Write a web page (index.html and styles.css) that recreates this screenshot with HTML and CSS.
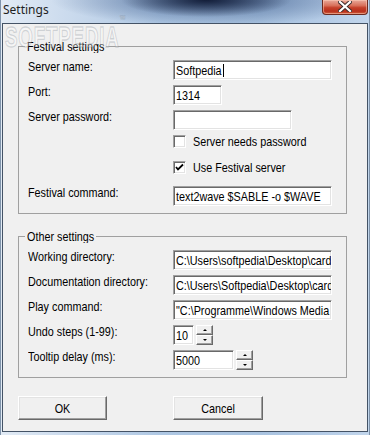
FILE: index.html
```html
<!DOCTYPE html>
<html>
<head>
<meta charset="utf-8">
<link rel="stylesheet" href="styles.css">
</head>
<body>
<div class="window">
  <div class="titlebar">
    <span class="title">Settings</span>
    <div class="close">
      <svg width="14" height="11" viewBox="0 0 14 11">
        <path d="M2 1 L12 10 M12 1 L2 10" stroke="#3a2a2a" stroke-width="4" stroke-linecap="square" fill="none"/>
        <path d="M2 1 L12 10 M12 1 L2 10" stroke="#ffffff" stroke-width="2.2" stroke-linecap="square" fill="none"/>
      </svg>
    </div>
  </div>
  <div class="client">
    <fieldset class="group g1">
      <legend><span class="t">Festival settings</span></legend>
      <div class="row"><span class="lbl t">Server name:</span><div class="field w-long"><span class="t">Softpedia</span><span class="caret"></span></div></div>
      <div class="row"><span class="lbl t">Port:</span><div class="field w-port"><span class="t">1314</span></div></div>
      <div class="row"><span class="lbl t">Server password:</span><div class="field w-pass"></div></div>
      <div class="row crow c1"><span></span><div class="check"><span class="box"></span><span class="ctext t">Server needs password</span></div></div>
      <div class="row crow c2"><span></span><div class="check"><span class="box"><svg width="9" height="9" viewBox="0 0 9 9"><path d="M1 4 L3 6.5 L8 1.5" stroke="#000" stroke-width="1.8" fill="none"/></svg></span><span class="ctext t">Use Festival server</span></div></div>
      <div class="row c3"><span class="lbl t">Festival command:</span><div class="field w-long"><span class="t">text2wave $SABLE -o $WAVE</span></div></div>
    </fieldset>
    <fieldset class="group g2">
      <legend><span class="t">Other settings</span></legend>
      <div class="row"><span class="lbl t">Working directory:</span><div class="field w-long"><span class="t">C:\Users\softpedia\Desktop\cards</span></div></div>
      <div class="row"><span class="lbl t">Documentation directory:</span><div class="field w-long"><span class="t">C:\Users\Softpedia\Desktop\cards</span></div></div>
      <div class="row"><span class="lbl t">Play command:</span><div class="field w-long"><span class="t">"C:\Programme\Windows Media Player\wmplayer.exe"</span></div></div>
      <div class="row"><span class="lbl t">Undo steps (1-99):</span><div class="spinwrap"><div class="field w-undo"><span class="t">10</span></div><div class="spin"><span class="sb up"><i></i></span><span class="sb dn"><i></i></span></div></div></div>
      <div class="row"><span class="lbl t">Tooltip delay (ms):</span><div class="spinwrap"><div class="field w-tip"><span class="t">5000</span></div><div class="spin"><span class="sb up"><i></i></span><span class="sb dn"><i></i></span></div></div></div>
    </fieldset>
    <div class="buttons">
      <button class="btn"><span class="t">OK</span></button>
      <button class="btn"><span class="t">Cancel</span></button>
    </div>
  </div>
  <div class="watermark">SOFTPEDIA<sup>™</sup></div>
</div>
</body>
</html>
```
FILE: styles.css
```css
html, body {
  margin: 0;
  padding: 0;
  background: #bcd2ea;
}
.window {
  position: relative;
  width: 370px;
  height: 435px;
  overflow: hidden;
  box-sizing: border-box;
  border-left: 1px solid #7f93aa;
  border-right: 1px solid #7f93aa;
  background:
    radial-gradient(ellipse 85px 17px at 205px 0px, rgba(16,26,52,0.95), rgba(16,26,52,0) 100%),
    radial-gradient(ellipse 160px 26px at 210px 0px, rgba(50,80,130,0.75), rgba(50,80,130,0) 100%),
    linear-gradient(90deg, #e2ebf5 0px, #cddcee 60px, #aec7e3 160px, #a9c3e0 260px, #b4cbe6 320px, #c2d6ec 370px);
  font-family: "Liberation Sans", Arial, sans-serif;
  font-size: 10.8px;
  color: #000;
}
.t {
  display: inline-block;
  transform: scaleY(1.18);
}
.titlebar {
  height: 23px;
  display: flex;
  align-items: flex-start;
}
.title {
  font-family: "Noto Sans", "Open Sans", sans-serif;
  font-size: 12px;
  line-height: 16px;
  padding: 2px 0 0 2px;
  color: #1e1e1e;
}
.close {
  margin-left: auto;
  margin-right: 1px;
  width: 46px;
  height: 15px;
  box-sizing: border-box;
  border: 1px solid #6b2a20;
  border-top: none;
  border-radius: 0 0 4px 4px;
  background: linear-gradient(180deg, #e9a99a 0%, #d8705a 40%, #c5402a 55%, #b8301c 80%, #d0603e 100%);
  box-shadow: inset 0 0 0 1px rgba(255,210,190,0.5);
  display: flex;
  align-items: center;
  justify-content: center;
}
.close svg { display: block; margin-top: -1px; }
.client {
  margin: 0 1px;
  height: 409px;
  box-sizing: border-box;
  border: 1px solid #445366;
  background: #f0f0f0;
  padding: 16px 20px 0 15px;
}
.group {
  margin: 0;
  padding: 7px 10px 7px 9px;
  border: 1px solid #a0a0a0;
  display: flex;
  flex-direction: column;
  gap: 5px;
  min-width: 0;
}
.group legend {
  padding: 0 2px;
  margin-left: -3px;
  line-height: 13px;
}
.g2 {
  margin-top: 16px;
}
.row {
  display: grid;
  grid-template-columns: 145px auto;
  justify-items: start;
}
.lbl {
  line-height: 15px;
  white-space: nowrap;
}
.crow { height: 13px; }
.c2 { margin-top: 8px; }
.c3 { margin-top: 7px; }
.field {
  height: 20px;
  box-sizing: border-box;
  border: 1px solid;
  border-color: #a0a0a0 #ffffff #ffffff #a0a0a0;
  box-shadow: inset 1px 1px 0 #696969, inset -1px -1px 0 #e3e3e3;
  background: #fff;
  line-height: 18px;
  padding-left: 2px;
  white-space: nowrap;
  overflow: hidden;
  display: flex;
  align-items: center;
}
.w-long { width: 159px; }
.w-port { width: 49px; }
.w-pass { width: 119px; }
.w-undo { width: 21px; }
.w-tip { width: 61px; }
.caret {
  display: inline-block;
  width: 1px;
  height: 13px;
  background: #000;
  margin-left: 1px;
}
.check {
  display: flex;
  align-items: flex-start;
  gap: 7px;
}
.box {
  width: 13px;
  height: 13px;
  box-sizing: border-box;
  border: 1px solid;
  border-color: #a0a0a0 #ffffff #ffffff #a0a0a0;
  box-shadow: inset 1px 1px 0 #696969, inset -1px -1px 0 #e3e3e3;
  background: #fff;
  display: flex;
  align-items: center;
  justify-content: center;
}
.box svg { display: block; }
.ctext { line-height: 13px; }
.spinwrap {
  display: flex;
  gap: 2px;
}
.spin {
  display: flex;
  flex-direction: column;
}
.sb {
  width: 17px;
  height: 10px;
  box-sizing: border-box;
  border: 1px solid;
  border-color: #ffffff #696969 #696969 #ffffff;
  box-shadow: inset -1px -1px 0 #a0a0a0;
  background: #f0f0f0;
  display: flex;
  align-items: center;
  justify-content: center;
}
.sb i {
  width: 0;
  height: 0;
  border-left: 2px solid transparent;
  border-right: 2px solid transparent;
}
.up i { border-bottom: 2px solid #000; }
.dn i { border-top: 2px solid #000; }
.buttons {
  display: flex;
  gap: 66px;
  margin-top: 18px;
}
.btn {
  width: 89px;
  height: 24px;
  margin: 0;
  padding: 0;
  box-sizing: border-box;
  border: 1px solid;
  border-color: #ffffff #696969 #696969 #ffffff;
  box-shadow: inset -1px -1px 0 #a0a0a0, inset 1px 1px 0 #e3e3e3;
  background: #f0f0f0;
  font-family: inherit;
  font-size: 10.8px;
  color: #000;
}
.btn + .btn { width: 90px; }
.watermark {
  position: absolute;
  left: 4px;
  top: 12px;
  font-family: "Liberation Sans", sans-serif;
  font-weight: bold;
  font-size: 22px;
  letter-spacing: 1px;
  color: rgba(255,255,255,0.35);
  -webkit-text-stroke: 1px rgba(120,130,140,0.28);
  pointer-events: none;
  line-height: 40px;
  transform: scale(0.85, 1.3);
  transform-origin: left top;
}
.watermark sup {
  font-size: 7px;
  vertical-align: top;
  line-height: 12px;
}
```
